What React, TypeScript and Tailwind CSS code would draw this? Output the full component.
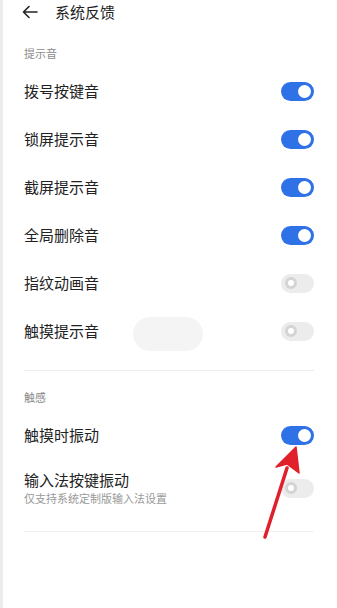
import React from "react";

function Toggle({ on }: { on: boolean }) {
  if (on) {
    return (
      <div className="w-[33px] h-[19px] rounded-full bg-[#2f72e8] flex items-center justify-end pr-[3px] shrink-0">
        <div className="w-[13px] h-[13px] rounded-full bg-white" />
      </div>
    );
  }
  return (
    <div className="w-[33px] h-[19px] rounded-full bg-[#ececec] flex items-center pl-[4px] shrink-0">
      <div className="w-[12px] h-[12px] rounded-full border-[3px] border-[#d4d4d4] bg-white" />
    </div>
  );
}

function Row({ label, on }: { label: string; on: boolean }) {
  return (
    <div className="h-[48px] flex items-center justify-between">
      <span className="text-[15px] text-[#222]">{label}</span>
      <Toggle on={on} />
    </div>
  );
}

export default function App() {
  return (
    <div
      className="relative w-[337px] h-[608px] bg-white border-l-[3px] border-[#ececec] overflow-hidden"
      style={{ fontFamily: '"Noto Sans CJK SC", "Noto Sans", sans-serif' }}
    >
      <div className="h-[24px] flex items-center pl-[19px]">
        <svg width="16" height="14" viewBox="0 0 16 14" fill="none" stroke="#222" strokeWidth="1.6" strokeLinecap="round" strokeLinejoin="round">
          <path d="M15 7H1.5M7 1.5L1.5 7L7 12.5" />
        </svg>
        <span className="ml-[17px] text-[15px] text-[#222]">系统反馈</span>
      </div>
      <div className="pl-[21px] pr-[23px]">
        <div className="mt-[21px] h-[16px] flex items-center text-[11px] text-[#8a8a8a]">提示音</div>
        <div className="mt-[6px]">
          <Row label="拨号按键音" on={true} />
          <Row label="锁屏提示音" on={true} />
          <Row label="截屏提示音" on={true} />
          <Row label="全局删除音" on={true} />
          <Row label="指纹动画音" on={false} />
          <Row label="触摸提示音" on={false} />
        </div>
        <div className="mt-[15px] h-px bg-[#ededed]" />
        <div className="mt-[18px] h-[16px] flex items-center text-[11px] text-[#8a8a8a]">触感</div>
        <div className="mt-[6px]">
          <Row label="触摸时振动" on={true} />
          <div className="h-[58px] flex items-center justify-between">
            <div className="flex flex-col">
              <span className="text-[15px] leading-[20px] text-[#222]">输入法按键振动</span>
              <span className="text-[11px] leading-[16px] text-[#999]">仅支持系统定制版输入法设置</span>
            </div>
            <Toggle on={false} />
          </div>
        </div>
        <div className="mt-[14px] h-px bg-[#f0f0f0]" />
      </div>
      <div className="absolute left-[130px] top-[317px] w-[70px] h-[34px] rounded-full bg-[#f4f4f4]" />
      <svg className="absolute left-0 top-0" width="337" height="608" viewBox="0 0 337 608">
        <path d="M262 537 L284 468" stroke="#e0202a" strokeWidth="3.5" strokeLinecap="round" />
        <path d="M293 447 L273 467 L284 464 L296 473 Z" fill="#e0202a" stroke="#e0202a" strokeWidth="1.5" strokeLinejoin="round" />
      </svg>
    </div>
  );
}
